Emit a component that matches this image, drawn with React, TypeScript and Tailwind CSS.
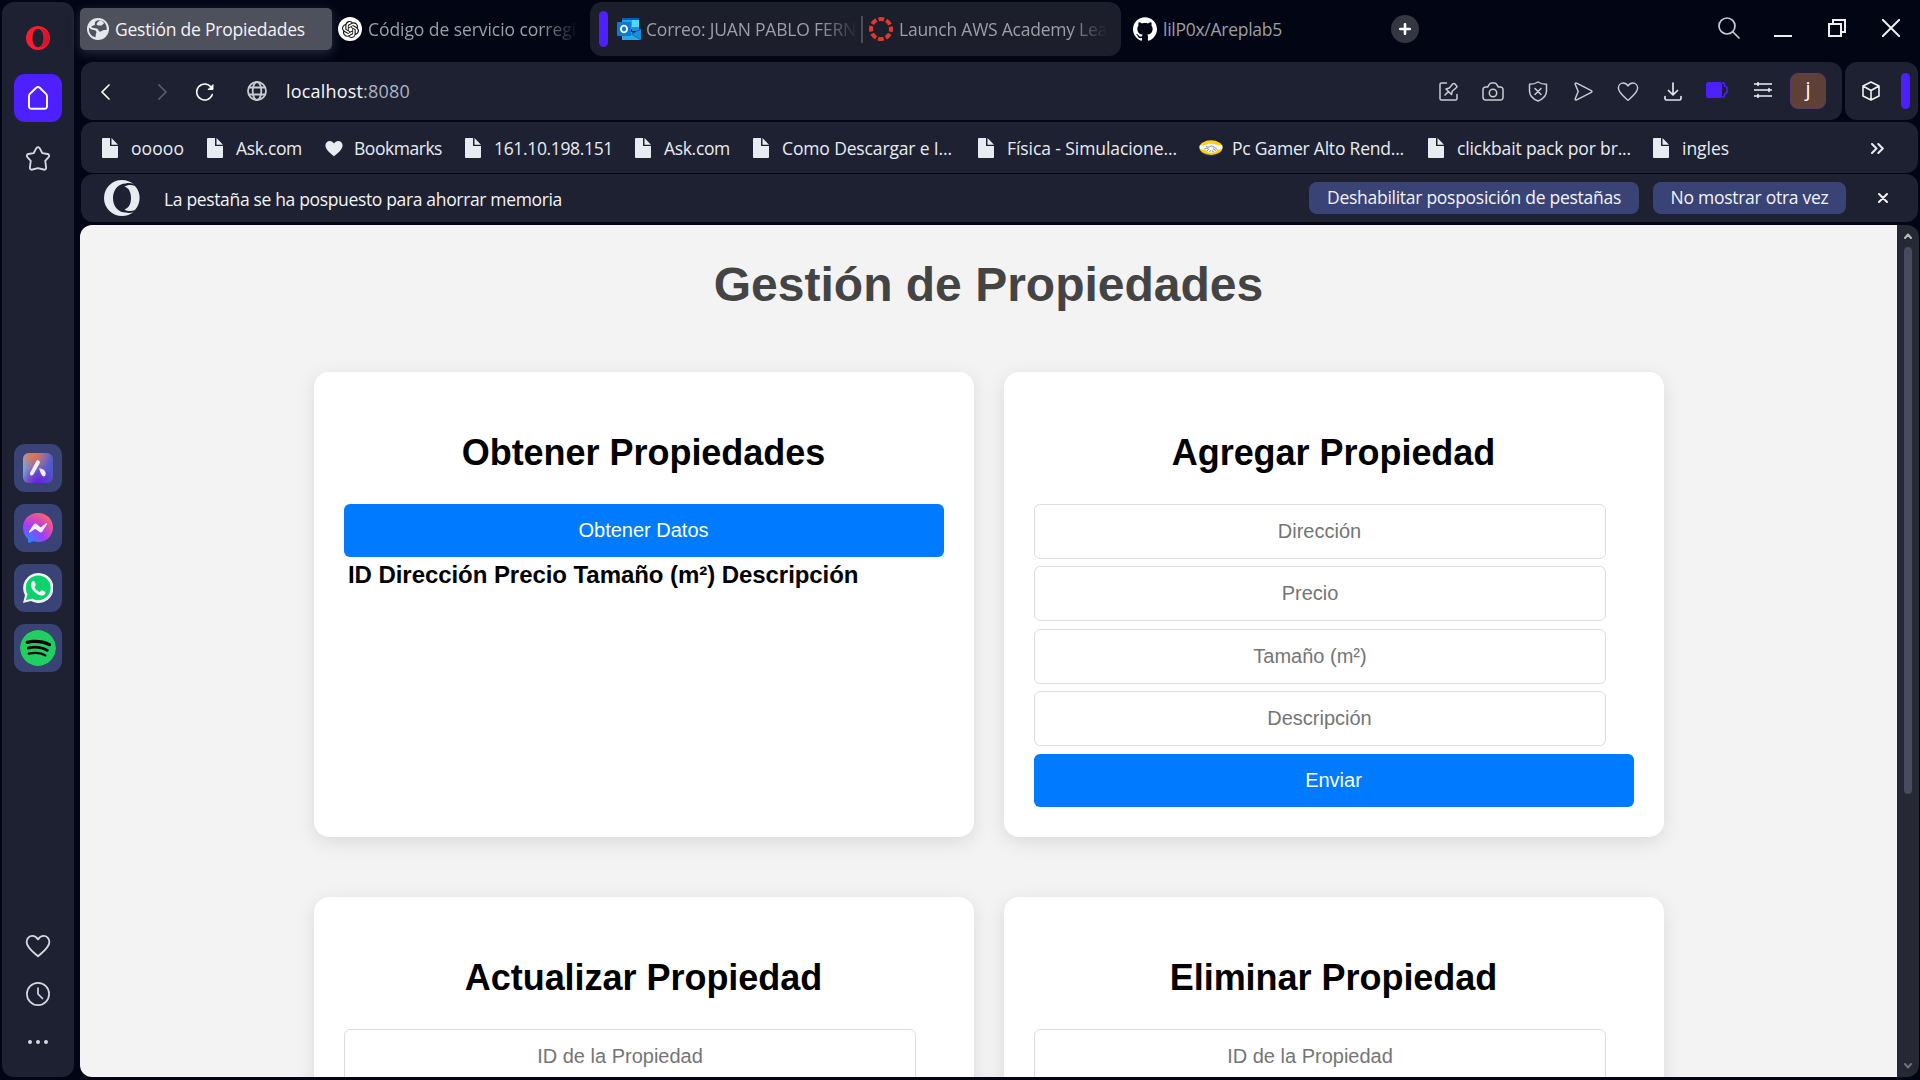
import { useLayoutEffect, useRef, useState, type ReactNode } from "react";
import { SiGithub, SiOpenai, SiSpotify } from "react-icons/si";

/* Text whose tracking adapts so that the run fills exactly `w` pixels. */
function Fit({ w, children, className = "" }: { w: number; children: string; className?: string }) {
  const ref = useRef<HTMLSpanElement>(null);
  const [ls, setLs] = useState(0);
  useLayoutEffect(() => {
    if (ref.current) {
      const natural = ref.current.getBoundingClientRect().width;
      setLs((w - natural) / children.length);
    }
  }, [w, children]);
  return (
    <span ref={ref} className={`inline-block shrink-0 whitespace-nowrap ${className}`} style={{ letterSpacing: ls }}>
      {children}
    </span>
  );
}

type IconProps = { className?: string; children?: ReactNode; box?: string; sw?: number };

function Line({ className = "", children, box = "0 0 24 24", sw = 1.7 }: IconProps) {
  return (
    <svg viewBox={box} className={`shrink-0 ${className}`} fill="none" stroke="currentColor" strokeWidth={sw} strokeLinecap="round" strokeLinejoin="round">
      {children}
    </svg>
  );
}

function OperaMark({ className = "" }: { className?: string }) {
  return (
    <svg viewBox="0 0 36 36" className={`shrink-0 ${className}`} fill="currentColor">
      <path d="M18 0A18 18 0 1 0 18 36c4.500 0 8.600-1.600 11.800-4.300-2.500 1.300-5.200 1.600-8 .9C14 32.600 9 26 9 18S14 3.400 21.800 3.400c2.800-.7 5.500-.4 8 .9C26.600 1.600 22.500 0 18 0z" />
      <path d="M20.500 6.500C23 4.800 27.500 4.300 31 6a18 18 0 0 1 0 24c-3.500 1.700-8 1.200-10.500-.5C25 28 27 23.500 27 18S25 8 20.500 6.500z" />
    </svg>
  );
}

/* Small red Opera "O" with the two halves joined. */
function OperaRed({ className = "" }: { className?: string }) {
  return (
    <svg viewBox="0 0 24 24" className={`shrink-0 ${className}`}>
      <path fillRule="evenodd" d="M12 0a12 12 0 1 0 0 24 12 12 0 0 0 0-24zm0 2.800c3.200 0 5.500 4 5.500 9.200s-2.300 9.200-5.500 9.200S6.500 17.200 6.500 12 8.800 2.800 12 2.800z" fill="#ff1b2d" />
      <path d="M13.500 3c3 .8 4.800 4.500 4.800 9s-1.800 8.200-4.800 9c2 .6 4.300.2 6.200-1.200A12 12 0 0 0 24 12a12 12 0 0 0-4.300-7.800C17.800 2.800 15.500 2.400 13.500 3z" fill="#d9142a" />
    </svg>
  );
}

const heartPath = "M12 21.5C8 18 1.5 13.5 1.5 8.3 1.5 5 4 2.7 6.8 2.7c2.200 0 3.9 1.100 5.200 3.200 1.300-2.100 3-3.200 5.200-3.200 2.800 0 5.300 2.300 5.300 5.600 0 5.200-6.500 9.700-10.500 13.200z";

function PageIcon() {
  return (
    <svg viewBox="0 0 16 20" className="h-5 w-4 shrink-0" fill="#e8ecf1">
      <path d="M1 0h7v8h8v11a1 1 0 0 1-1 1H1a1 1 0 0 1-1-1V1a1 1 0 0 1 1-1z" />
      <path d="M9.500 0 16 6.700H9.500z" />
    </svg>
  );
}

function HeartSolid() {
  return (
    <svg viewBox="1 2 22 20" className="h-[17px] w-[18px] shrink-0" fill="#e8ecf1">
      <path d={heartPath} />
    </svg>
  );
}

function Handshake() {
  return (
    <svg viewBox="0 0 24 16" className="h-4 w-6 shrink-0">
      <ellipse cx="12" cy="8" rx="12" ry="8" fill="#2d3277" />
      <ellipse cx="12" cy="7.600" rx="11.500" ry="7.300" fill="#ffd100" />
      <path d="M.8 5.200c3 .4 5 0 7-1 2-.9 3-.6 4.200-.1 1.500-.6 3-.5 4.300.1 2 .9 4 1.300 6.900 1 .4 1.500.2 3-.5 4-1.800 0-3.200.2-4.200 1-1.500 1.600-3.500 2.600-6 2.600s-4.500-1-6-2.600c-1.100-.8-3-1-5.200-1C.6 8.300.5 6.500.8 5.200z" fill="#f4f4f6" />
      <path d="M7 6.500c2 1 3.500.8 5-.7 2 .4 4.500 2 6.500 4M5.500 9 8 8l1.500 1M8 11l1.500-1.500M10.500 12l1-1.500M14.800 12l-2-1.500M16.800 10.600 14 8.600" stroke="#72768f" strokeWidth=".8" fill="none" />
    </svg>
  );
}

const bookmarks = [
  { t: "ooooo", w: 53, box: "w-[105px]", k: "page" },
  { t: "Ask.com", w: 66, box: "w-[118px]", k: "page" },
  { t: "Bookmarks", w: 88, box: "w-[140px]", k: "heart" },
  { t: "161.10.198.151", w: 119, box: "w-[170px]", k: "page" },
  { t: "Ask.com", w: 66, box: "w-[118px]", k: "page" },
  { t: "Como Descargar e I...", w: 170, box: "w-[225px]", k: "page" },
  { t: "Física - Simulacione...", w: 170, box: "w-[221px]", k: "page" },
  { t: "Pc Gamer Alto Rend...", w: 172, box: "w-[229px]", k: "ml" },
  { t: "clickbait pack por br...", w: 174, box: "w-[225px]", k: "page" },
  { t: "ingles", w: 47, box: "w-[90px]", k: "page" },
];

function Sidebar() {
  return (
    <aside className="ml-0.5 flex h-[1075px] w-[72px] shrink-0 flex-col items-center rounded-xl bg-[#1e2132] text-[#d5d8df]">
      <OperaRed className="mt-6 h-6 w-6" />
      <div className="mt-6 flex h-12 w-12 items-center justify-center rounded-[11px] bg-[#4e1fff] text-white">
        <Line className="h-6 w-6" sw={1.900}>
          <path d="M3 10.200v10.300a2.300 2.300 0 0 0 2.300 2.300h13.400a2.300 2.300 0 0 0 2.300-2.300V10.200c0-1-.3-1.700-1-2.400L13.800 1.800a2.600 2.600 0 0 0-3.600 0L4 7.800c-.7.700-1 1.400-1 2.400z" />
        </Line>
      </div>
      <Line className="mt-6 h-[26px] w-[26px]" sw={1.700}>
        <path d="M10.300 2.200a1.900 1.900 0 0 1 3.400 0L15.900 6.500l5 .9a1.700 1.700 0 0 1 .9 2.900L18.700 13.700l.8 6.200a1.700 1.700 0 0 1-2.400 1.800L12 20.400l-5.100 1.300a1.700 1.700 0 0 1-2.400-1.800l.8-6.200-3.100-3.400a1.700 1.700 0 0 1 .9-2.900l5-.9z" />
      </Line>
      <div className="mt-[272px] flex flex-col gap-3">
        <div className="flex h-12 w-12 items-center justify-center rounded-[11px] bg-[#394376]">
          <svg viewBox="0 0 30 30" className="h-[30px] w-[30px]">
            <defs>
              <linearGradient id="ariaBase" x1="0" y1="0" x2="1" y2="0.300">
                <stop offset="0" stopColor="#6fc4e8" />
                <stop offset=".4" stopColor="#7b74c8" />
                <stop offset="1" stopColor="#4f58c8" />
              </linearGradient>
              <radialGradient id="ariaTop" cx=".35" cy="0" r=".6">
                <stop offset="0" stopColor="#f5703c" />
                <stop offset="1" stopColor="#f5703c" stopOpacity="0" />
              </radialGradient>
              <radialGradient id="ariaBottom" cx=".5" cy="1" r=".6">
                <stop offset="0" stopColor="#6a1fd0" />
                <stop offset="1" stopColor="#6a1fd0" stopOpacity="0" />
              </radialGradient>
            </defs>
            <rect width="30" height="30" rx="6" fill="url(#ariaBase)" />
            <rect width="30" height="30" rx="6" fill="url(#ariaTop)" />
            <rect width="30" height="30" rx="6" fill="url(#ariaBottom)" />
            <path d="M13.700 7.500c1.400-.9 3.300.2 3.200 1.800 0 .5-.2.900-.4 1.300l-5.800 10.500c-.6 1.200-2 1.800-3 1.100-.9-.6-1-1.800-.4-2.900z" fill="#f0f0f5" />
            <path d="M16 15.200c3.500.2 6.700 2.300 6.700 5.200 0 1.800-.8 2.900-2 3.100-2.600-.900-3.500-5.200-4.700-8.300z" fill="#f0f0f5" />
          </svg>
        </div>
        <div className="flex h-12 w-12 items-center justify-center rounded-[11px] bg-[#394376]">
          <svg viewBox="0 0 30 30" className="h-[30px] w-[30px]">
            <defs>
              <radialGradient id="msg" cx=".15" cy="1" r="1.150">
                <stop offset="0" stopColor="#1a8cff" />
                <stop offset=".5" stopColor="#a23cff" />
                <stop offset=".75" stopColor="#d84bb0" />
                <stop offset="1" stopColor="#ff6968" />
              </radialGradient>
            </defs>
            <path d="M15 0c8.500 0 15 6.200 15 14.400S23.500 29 15 29c-1.700 0-3.200-.2-4.600-.7L5.500 30c-.5 0-.5-3.500-.7-4.200C1.800 23 0 19 0 14.400 0 6.200 6.500 0 15 0z" fill="url(#msg)" />
            <path d="m6 18.600 4.500-6.800a2.200 2.200 0 0 1 3.300-.5l3.400 2.600c.4.300.800.300 1.200 0l4.600-3.600c.6-.5 1.400.3 1 .9l-4.500 7a2.200 2.200 0 0 1-3.300.6l-3.400-2.500c-.4-.3-.8-.3-1.200 0L7 19.600c-.7.500-1.400-.3-1-1z" fill="#f0f0f5" />
          </svg>
        </div>
        <div className="flex h-12 w-12 items-center justify-center rounded-[11px] bg-[#394376]">
          <svg viewBox="0 0 30 30" className="h-[30px] w-[30px]">
            <path d="M15 0a15 15 0 1 1-7 28L0 30l2-7.700A15 15 0 0 1 15 0z" fill="#f0f0f5" />
            <circle cx="15.200" cy="14.800" r="12.400" fill="#0bd36b" />
            <path d="M2.800 27.300 4.600 21l4.800 4.600z" fill="#0bd36b" />
            <path d="M8.300 9.700c1.200-2.300 3-2 3.400-1l1.100 2.700c.4 1.200-1.500 2.200-1.300 2.900 1 2.200 2.800 3.700 5.100 4.600.8.200 1.500-2 2.500-1.700l2.800 1.300c1 .6.400 3-1.500 3.800-2.300.9-6.400-.6-9.200-3.600-2.700-2.700-4-6.500-2.900-9z" fill="#f0f0f5" />
          </svg>
        </div>
        <div className="flex h-12 w-12 items-center justify-center rounded-[11px] bg-[#394376]">
          <div className="flex h-9 w-9 items-center justify-center rounded-full bg-black">
            <SiSpotify className="h-9 w-9 shrink-0 text-[#22cd62]" />
          </div>
        </div>
      </div>
      <Line className="mt-[261px] h-[26px] w-[26px]" sw={1.700}>
        <path d={heartPath} />
      </Line>
      <Line className="mt-[23px] h-6 w-6" sw={1.700}>
        <circle cx="12" cy="12" r="11.100" />
        <path d="M12 6v6l4.500 4.500" />
      </Line>
      <div className="mt-[34px] flex gap-1">
        <i className="h-1 w-1 rounded-full bg-[#d5d8df]" />
        <i className="h-1 w-1 rounded-full bg-[#d5d8df]" />
        <i className="h-1 w-1 rounded-full bg-[#d5d8df]" />
      </div>
    </aside>
  );
}

const fade = "overflow-hidden [mask-image:linear-gradient(to_right,black_82%,transparent)]";

function Tabs() {
  return (
    <div className="flex h-[62px] shrink-0 items-start text-[17.500px] leading-[54px] text-[#9d9ea6]">
      <div className="mt-2 flex h-[42px] w-[252px] shrink-0 items-center rounded-[5px] bg-[#4e505b] pl-[7px] text-[#f3f3f5] shadow-[0_3px_12px_rgba(110,115,140,0.35)]">
        <svg viewBox="0 0 22 22" className="h-[22px] w-[22px] shrink-0">
          <circle cx="11" cy="11" r="11" fill="#e4e7ec" />
          <path d="M13 2.300C9.500 2 7.500 3.500 8 5.500c.3 1.300-.5 1.800-2 2.200C4 8.200 4 9.300 5.500 9.800c2 .7 4 .2 5.500 1.500.8.800.2 1.700 1.500 2.200 1.500.5 2-.8 3.500-1.300 1.500-.4 3 .2 3.800-.7C20 7 17.500 3 13 2.300z" fill="#50535e" />
          <path d="M13 2.300c2 .5 3.500 1.500 4 3.200-1.300.5-1.500 1.700-2.800 2C12.500 7.900 11.500 7 10 7.300c-.8-1.300 0-2.300.8-3z" fill="#e4e7ec" />
          <path d="M2 9.500c1.500 2.200 3 2 5 2.500 2.300.6 2.800 1.800 2.200 3.200-.6 1.200-.4 2.500-.7 4.100C4.300 18.500 1.300 14.500 2 9.500z" fill="#50535e" />
        </svg>
        <Fit w={190} className="ml-[6px]">Gestión de Propiedades</Fit>
      </div>
      <div className="ml-[6px] flex h-[58px] w-[252px] shrink-0 items-center">
        <span className="flex h-6 w-6 shrink-0 items-center justify-center rounded-full bg-white text-[#111]">
          <SiOpenai className="h-[17px] w-[17px]" />
        </span>
        <div className={`ml-[6px] w-[210px] ${fade}`}>
          <Fit w={208}>Código de servicio corregi</Fit>
        </div>
      </div>
      <div className="mt-0.5 flex h-[54px] w-[531px] shrink-0 items-center rounded-xl bg-[#1c1e2c]">
        <i className="ml-[9px] h-9 w-[9px] shrink-0 rounded-full bg-[#4e1fff]" />
        <svg viewBox="0 0 24 22" className="ml-[9px] h-[22px] w-6 shrink-0">
          <rect x="5" width="17" height="3" fill="#0a5ea8" />
          <rect x="5" y="2" width="10" height="9" fill="#28a0e8" />
          <rect x="15" y="2" width="7" height="7" fill="#50d9ff" />
          <rect x="15" y="9" width="7" height="4" fill="#1b8fdd" />
          <path d="M5 14h10l9 8H5z" fill="#28a8ea" />
          <path d="M24 11v11L14.500 16z" fill="#1490df" />
          <path d="M24 11 14.500 16 24 22" fill="none" stroke="#0c5fae" strokeWidth=".8" />
          <rect y="4" width="14" height="14" rx="1" fill="#0a78d4" />
          <ellipse cx="7" cy="11" rx="3" ry="3.400" fill="none" stroke="#fff" strokeWidth="1.900" />
        </svg>
        <div className={`ml-[5px] w-[212px] shrink-0 ${fade}`}>
          <Fit w={210}>Correo: JUAN PABLO FERN</Fit>
        </div>
        <i className="ml-[3px] h-[27px] w-0.5 shrink-0 bg-[#4a4c58]" />
        <svg viewBox="0 0 24 24" className="ml-[6px] h-6 w-6 shrink-0">
          <circle cx="12" cy="12" r="10" fill="none" stroke="#e4392a" strokeWidth="4" strokeDasharray="5.700 2.154" strokeDashoffset="2.850" />
        </svg>
        <div className={`ml-[6px] w-[208px] shrink-0 ${fade}`}>
          <Fit w={208}>Launch AWS Academy Lea</Fit>
        </div>
      </div>
      <div className="ml-3 flex h-[58px] w-[258px] shrink-0 items-center">
        <SiGithub className="h-6 w-6 text-white" />
        <Fit w={119} className="ml-[6px]">lilP0x/Areplab5</Fit>
      </div>
      <div className="mt-[15px] flex h-7 w-7 shrink-0 items-center justify-center rounded-full bg-[#343642] text-white">
        <Line className="h-3 w-3" box="0 0 12 12" sw={2.600}><path d="M6 1.200v9.600M1.200 6h9.600" /></Line>
      </div>
      <div className="ml-auto mr-[19px] flex h-[56px] items-center text-[#eceef2]">
        <Line className="mr-[34px] h-[22px] w-[22px] text-[#c9ccd2]" box="0 0 22 22">
          <circle cx="9" cy="9" r="8" />
          <path d="m15 15 6 6" />
        </Line>
        <Line className="mr-9 h-[18px] w-[18px]" box="0 0 18 18" sw={2}><path d="M0 17h18" strokeLinecap="butt" /></Line>
        <Line className="mr-9 h-[18px] w-[18px]" box="0 0 18 18" sw={2}>
          <path d="M1 5h12v12H1zM5 5V1h12v12h-4" strokeLinejoin="miter" />
        </Line>
        <Line className="h-[18px] w-[18px]" box="0 0 18 18" sw={2}><path d="m.700.700 16.600 16.600M17.300.700.700 17.300" /></Line>
      </div>
    </div>
  );
}

function Toolbar() {
  return (
    <div className="flex h-[58px] shrink-0 gap-[3px] text-[#c9ccd2]">
      <div className="flex w-[1761px] shrink-0 items-center rounded-xl bg-[#1e2132]">
        <Line className="ml-5 mt-0.5 h-4 w-[9px] text-white" box="0 0 9 16" sw={1.700}><path d="M8 1 1 8l7 7" /></Line>
        <Line className="ml-12 mt-0.5 h-4 w-[9px] text-[#5b5e6b]" box="0 0 9 16"><path d="m1 1 7 7-7 7" /></Line>
        <Line className="ml-[29px] mt-0.5 h-[18px] w-[18px] text-white" box="0 0 18 18" sw={1.600}>
          <path d="M16.300 11.500A8 8 0 1 1 15 4" />
          <path d="M17 2v4.500h-4.500z" fill="currentColor" strokeWidth="1" />
        </Line>
        <Line className="ml-[33px] h-5 w-5" box="0 0 20 20" sw={1.800}>
          <circle cx="10" cy="10" r="9" />
          <ellipse cx="10" cy="10" rx="4.300" ry="9" />
          <path d="M2 6.500h16M2 13.500h16" />
        </Line>
        <div className="ml-[19px] flex pb-px text-[18px] leading-6">
          <Fit w={77} className="text-[#f6f7f9]">localhost</Fit>
          <Fit w={47} className="text-[#aeb4c2]">:8080</Fit>
        </div>
        <div className="ml-auto mr-4 flex items-center">
          <Line className="h-[19px] w-[19px]" box="0 0 19 19" sw={1.500}>
            <path d="M7.500 1H2.500A1.500 1.500 0 0 0 1 2.500v14A1.500 1.500 0 0 0 2.500 18h14a1.500 1.500 0 0 0 1.500-1.500V12.500" />
            <path d="m6 13 3.500-3.500M7 7l5.500 5.500.7-3.300L17.500 5.500a1.300 1.300 0 0 0 0-1.800L15.800 1.800a1.300 1.300 0 0 0-1.900 0L10.300 6z" />
          </Line>
          <Line className="ml-6 h-[19px] w-[22px]" box="0 0 22 19" sw={1.500}>
            <path d="M1 7.500A2.500 2.500 0 0 1 3.500 5h2.200L7.500 2.200A2.500 2.500 0 0 1 9.500 1h3a2.500 2.500 0 0 1 2 1.200L16.300 5h2.200A2.500 2.500 0 0 1 21 7.500v8a2.500 2.500 0 0 1-2.500 2.500h-15A2.500 2.500 0 0 1 1 15.500z" />
            <circle cx="11" cy="11" r="3.700" />
          </Line>
          <Line className="ml-6 h-[21px] w-[20px]" box="0 0 20 21" sw={1.500}>
            <path d="M10 1c2.500 1.700 5.300 2.300 8.500 2.300V10c0 5-3.500 8-8.500 10-5-2-8.500-5-8.500-10V3.300C4.700 3.300 7.500 2.700 10 1z" />
            <path d="m7 7.500 6 6M13 7.500l-6 6" />
          </Line>
          <Line className="ml-[26px] h-[19px] w-[19px]" box="0 0 19 19" sw={1.500}>
            <path d="M1.200 2.300C1 1.300 1.800.700 2.700 1.200l14.600 7.400c.9.500.9 1.300 0 1.800L2.700 17.800c-.9.500-1.700-.1-1.500-1.100l3-7.200z" />
          </Line>
          <Line className="ml-6 h-[23px] w-[22px]" sw={1.600}><path d={heartPath} /></Line>
          <Line className="ml-[25px] h-[19px] w-[18px] text-[#e2e4e8]" box="0 0 18 19" sw={1.700}>
            <path d="M9 1v11.500M4.500 8.500 9 13l4.500-4.500M1 14.500v2A1.500 1.500 0 0 0 2.500 18h13a1.500 1.500 0 0 0 1.500-1.500v-2" />
          </Line>
          <svg viewBox="0 0 22 16" className="ml-6 mb-0.5 h-4 w-[22px] shrink-0">
            <rect width="16" height="16" rx="2.500" fill="#4e1fff" />
            <path d="M15.500 1h1.700A1.300 1.300 0 0 1 18.500 2.300v1.500L21 5.500v5l-2.500 1.700v1.500a1.300 1.300 0 0 1-1.300 1.300h-1.700" fill="none" stroke="#4e1fff" strokeWidth="1.500" />
          </svg>
          <Line className="ml-[26px] mb-0.5 h-4 w-[18px] text-[#eceef2]" box="0 0 18 16" sw={1.600}>
            <path d="M.5 2h17M.5 8h17M.5 14h17M4 .5v3M15 6.500v3M4 12.500v3" />
          </Line>
          <div className="ml-[18px] flex h-9 w-9 items-center justify-center rounded-lg border border-[#5a3a6a] bg-[#5e4037] pb-1 text-[20px] text-white">j</div>
        </div>
      </div>
      <div className="flex w-[73px] shrink-0 items-center rounded-xl bg-[#1e2132]">
        <Line className="ml-[17px] h-5 w-[18px] text-[#f0f1f4]" box="0 0 18 20" sw={1.600}>
          <path d="m9 1 8 4v10l-8 4-8-4V5zM1 5l8 4.500L17 5M9 9.500V19" />
        </Line>
        <i className="ml-[21px] h-9 w-[9px] rounded-full bg-[#4e1fff]" />
      </div>
    </div>
  );
}

function Bookmarks() {
  return (
    <div className="mt-0.5 flex h-[51px] w-[1837px] shrink-0 items-center rounded-xl bg-[#1e2132] pl-[21px] pt-px text-[17.500px] leading-6 text-[#e8ecf1]">
      {bookmarks.map((b, i) => (
        <div key={i} className={`flex shrink-0 items-center gap-[13px] ${b.box}`}>
          {b.k === "page" ? <PageIcon /> : b.k === "heart" ? <HeartSolid /> : <Handshake />}
          <Fit w={b.w} className={b.k === "ml" ? "-ml-1" : b.k === "heart" ? "-ml-[2px]" : ""}>{b.t}</Fit>
        </div>
      ))}
      <Line className="ml-auto mr-[34px] h-[11px] w-[13px]" box="0 0 13 11" sw={2}>
        <path d="m1 1 4.500 4.500L1 10M7.300 1l4.500 4.500L7.300 10" />
      </Line>
    </div>
  );
}

function Notice() {
  return (
    <div className="mt-px flex h-12 w-[1837px] shrink-0 items-center rounded-xl bg-[#1e2132] text-[17.500px] text-[#f3f4f7]">
      <OperaMark className="ml-[23px] h-9 w-9 text-[#e8ecf1]" />
      <Fit w={398} className="ml-6 pt-[3px]">La pestaña se ha pospuesto para ahorrar memoria</Fit>
      <div className="ml-auto flex h-8 w-[330px] items-center justify-center rounded-lg bg-[#394376] pb-px">
        <Fit w={294}>Deshabilitar posposición de pestañas</Fit>
      </div>
      <div className="ml-[14px] flex h-8 w-[193px] items-center justify-center rounded-lg bg-[#394376] pb-px">
        <Fit w={158}>No mostrar otra vez</Fit>
      </div>
      <Line className="ml-8 mr-[30px] h-[10px] w-[10px]" box="0 0 10 10" sw={2}><path d="m1 1 8 8M9 1 1 9" /></Line>
    </div>
  );
}

function Card({ title, children, height }: { title: string; children: ReactNode; height: string }) {
  return (
    <section className={`w-[660px] rounded-[15px] bg-white p-[30px] shadow-[0_5px_19px_rgba(0,0,0,0.1)] ${height}`}>
      <h2 className="mt-[30px] mb-[30px] pr-px text-center text-[36px] leading-[42px] font-bold tracking-[-0.03px] text-black">{title}</h2>
      {children}
    </section>
  );
}

function Field({ label, spinner = false, className = "" }: { label: string; spinner?: boolean; className?: string }) {
  return (
    <div className={`h-[55px] w-[572px] rounded-[6px] border border-[#ddd] text-center text-[20px] leading-[53px] text-[#757575] ${spinner ? "pr-5" : "pr-px"} ${className}`}>
      {label}
    </div>
  );
}

function Action({ label, className = "" }: { label: string; className?: string }) {
  return (
    <button className={`block h-[53px] w-[600px] rounded-[6px] bg-[#007bff] pr-px text-center text-[20px] leading-[53px] text-white ${className}`}>
      {label}
    </button>
  );
}

function Content() {
  return (
    <main className="h-[852px] w-[1817px] shrink-0 overflow-hidden rounded-l-xl rounded-r-none bg-[#f3f3f3] font-['Liberation_Sans',Arial,sans-serif]">
      <h1 className="mt-8 text-center text-[48px] leading-[56px] font-bold text-[#444]">Gestión de Propiedades</h1>
      <div className="mt-[59px] ml-[234px] grid w-[1350px] grid-cols-[660px_660px] gap-x-[30px] gap-y-[60px]">
        <Card title="Obtener Propiedades" height="h-[465px]">
          <Action label="Obtener Datos" />
          <p className="ml-1 pt-1 text-[24px] leading-7 font-bold tracking-[-0.06px] text-black">
            ID Dirección Precio Tamaño (m²) Descripción
          </p>
        </Card>
        <Card title="Agregar Propiedad" height="h-[465px]">
          <Field label="Dirección" />
          <Field label="Precio" spinner className="mt-[7px]" />
          <Field label="Tamaño (m²)" spinner className="mt-2" />
          <Field label="Descripción" className="mt-[7px]" />
          <Action label="Enviar" className="mt-2" />
        </Card>
        <Card title="Actualizar Propiedad" height="h-[540px]">
          <Field label="ID de la Propiedad" spinner />
        </Card>
        <Card title="Eliminar Propiedad" height="h-[540px]">
          <Field label="ID de la Propiedad" spinner />
        </Card>
      </div>
    </main>
  );
}

function Scrollbar() {
  return (
    <div className="flex h-[852px] w-[22px] shrink-0 flex-col items-center rounded-r-xl bg-[#262934] text-[#b9bbc0]">
      <Line className="mt-2 h-[6px] w-[8px]" box="0 0 8 6" sw={2}><path d="M1 5l3-3.500L7 5" /></Line>
      <i className="mt-2 h-[547px] w-2 rounded-full bg-[#494b63]" />
      <Line className="mt-auto mb-[8px] h-[6px] w-[8px] text-[#6f7178]" box="0 0 8 6" sw={2}><path d="M1 1l3 3.500L7 1" /></Line>
    </div>
  );
}

export default function App() {
  return (
    <div className="flex h-[1080px] w-[1920px] overflow-hidden bg-[#020514] pt-0.5 font-['Open_Sans','Noto_Sans',sans-serif]">
      <Sidebar />
      <div className="-mt-0.5 ml-1.5 flex flex-col">
        <Tabs />
        <div className="ml-px flex flex-col">
          <Toolbar />
          <Bookmarks />
          <Notice />
        </div>
        <div className="mt-[3px] flex">
          <Content />
          <Scrollbar />
        </div>
      </div>
    </div>
  );
}
